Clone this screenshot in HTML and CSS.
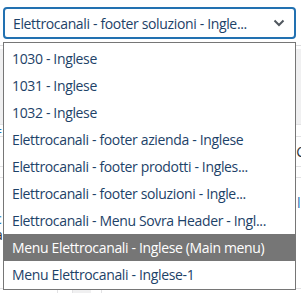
FILE: index.html
```html
<!DOCTYPE html>
<html lang="en">
<head>
    <meta charset="UTF-8">
    <meta name="viewport" content="width=device-width, initial-scale=1.0">
    <title>Select menu</title>
    <link rel="stylesheet" href="styles.css">
</head>
<body>
    <div class="screen">
        <div class="field">
            <div class="select">
                <span class="select-text">Elettrocanali - footer soluzioni - Ingle...</span>
                <svg class="chevron" width="12" height="8" viewBox="0 0 12 8">
                    <path d="M1.5 1.5 L6 6 L10.5 1.5" fill="none" stroke="#50575e" stroke-width="2"/>
                </svg>
            </div>
        </div>

        <!-- page content that sits under the open list -->
        <div class="backdrop">
            <div class="row row-head"></div>
            <div class="row row-gray"></div>
            <div class="row row-a">
                <span class="frag left link">=</span>
            </div>
            <div class="row row-b">
                <span class="frag right">C</span>
            </div>
            <div class="row row-c"></div>
            <div class="row row-d">
                <span class="frag right link">li</span>
                <span class="frag left link low">c</span>
                <span class="frag left lower">a</span>
            </div>
            <div class="row-foot">
                <span class="cell c1"></span>
                <span class="cell c2"></span>
                <span class="cell c3"></span>
            </div>
        </div>

        <ul class="options">
            <li class="option">1030 - Inglese</li>
            <li class="option">1031 - Inglese</li>
            <li class="option">1032 - Inglese</li>
            <li class="option">Elettrocanali - footer azienda - Inglese</li>
            <li class="option">Elettrocanali - footer prodotti - Ingles...</li>
            <li class="option">Elettrocanali - footer soluzioni - Ingle...</li>
            <li class="option">Elettrocanali - Menu Sovra Header - Ingl...</li>
            <li class="option selected">Menu Elettrocanali - Inglese (Main menu)</li>
            <li class="option">Menu Elettrocanali - Inglese-1</li>
        </ul>
    </div>
</body>
</html>
```

FILE: styles.css
```css
body {
    margin: 0;
    background: #fff;
    font-family: "Open Sans", "Noto Sans", sans-serif;
}

.screen {
    position: relative;
    width: 301px;
    height: 293px;
    overflow: hidden;
}

.field {
    padding: 7px 5px 0 3px;
}

.select {
    display: flex;
    align-items: center;
    justify-content: space-between;
    height: 32px;
    box-sizing: border-box;
    border: 2px solid #2271b1;
    border-radius: 4px;
    padding: 0 8px;
}

.select-text {
    font-size: 14px;
    letter-spacing: -0.35px;
    color: #1d4268;
}

.chevron {
    margin-right: 1px;
}

.backdrop {
    margin-top: 6px;
    border-top: 1px solid #dcdcde;
}

.row {
    position: relative;
    border-bottom: 1px solid #e2e2e4;
    font-size: 14px;
    color: #2c3338;
}

.row-head {
    height: 3px;
    border-bottom: none;
}

.row-gray {
    height: 75px;
    background: #f0f0f1;
}

.row-a {
    height: 11px;
}

.row-b {
    height: 29px;
}

.row-c {
    height: 10px;
}

.row-d {
    height: 110px;
    border-bottom: none;
}

.frag {
    position: absolute;
    line-height: 14px;
}

.frag.link {
    color: #2271b1;
}

.frag.left {
    left: -6px;
    top: -1px;
}

.frag.right {
    right: -4px;
    top: 8px;
}

.row-d .frag.right {
    right: -3px;
    top: 18px;
}

.frag.left.low {
    top: 34px;
    left: -5px;
}

.frag.left.lower {
    top: 50px;
    left: -5px;
}

.row-foot {
    display: flex;
    height: 40px;
    border-top: 1px solid #e2e2e4;
}

.cell {
    display: block;
    height: 100%;
}

.c1 {
    width: 57px;
    border-right: 1px solid #e2e2e4;
}

.c2 {
    width: 18px;
    margin-left: 14px;
    border-left: 1px solid #e2e2e4;
    background: #f0f0f1;
}

.c3 {
    width: 10px;
    margin-left: 10px;
    border-left: 1px solid #e2e2e4;
}

.options {
    position: absolute;
    top: 42px;
    left: 3px;
    width: 293px;
    box-sizing: border-box;
    margin: 0;
    padding: 2px 0 1px;
    list-style: none;
    background: #fff;
    border: 1px solid #767676;
}

.option {
    height: 27px;
    line-height: 27px;
    padding: 0 8px;
    font-size: 14px;
    letter-spacing: -0.35px;
    color: #1d4268;
    white-space: nowrap;
}

.option.selected {
    background: #767676;
    color: #fff;
}
```
